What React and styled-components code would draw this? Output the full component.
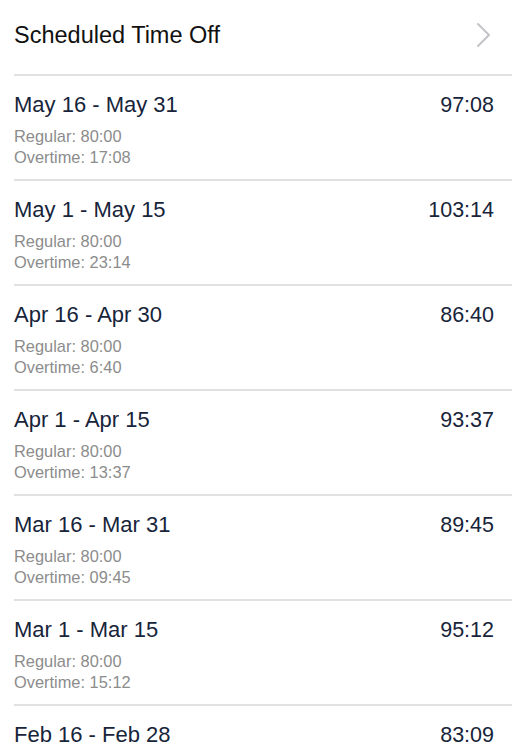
import React from "react";
import styled, { createGlobalStyle } from "styled-components";

const Global = createGlobalStyle`
  html, body { margin: 0; padding: 0; background: #fff; }
  body { font-family: "Liberation Sans", Arial, sans-serif; -webkit-font-smoothing: antialiased; }
`;

const Page = styled.div`
  width: 512px;
  height: 754px;
  overflow: hidden;
  background: #fff;
`;

const Header = styled.div`
  height: 74px;
  display: flex;
  align-items: center;
  justify-content: space-between;
  padding: 0 20px 4px 14px;
  box-sizing: border-box;
`;

const HeaderTitle = styled.div`
  font-size: 23.5px;
  color: #111;
`;

const List = styled.div`
  margin-left: 14px;
`;

const Row = styled.div`
  border-top: 2px solid #e1e1e1;
  padding: 16px 18px 11px 0;
  display: flex;
  justify-content: space-between;
  align-items: flex-start;
`;

const Info = styled.div`
  display: flex;
  flex-direction: column;
`;

const Title = styled.div`
  font-size: 22px;
  line-height: 26px;
  color: #17243a;
  margin-bottom: 8px;
`;

const Sub = styled.div`
  font-size: 16.4px;
  line-height: 21px;
  color: #8c8c8c;
`;

const Total = styled.div`
  font-size: 21.5px;
  line-height: 26px;
  color: #17243a;
`;

const rows = [
  ["May 16 - May 31", "97:08", "80:00", "17:08"],
  ["May 1 - May 15", "103:14", "80:00", "23:14"],
  ["Apr 16 - Apr 30", "86:40", "80:00", "6:40"],
  ["Apr 1 - Apr 15", "93:37", "80:00", "13:37"],
  ["Mar 16 - Mar 31", "89:45", "80:00", "09:45"],
  ["Mar 1 - Mar 15", "95:12", "80:00", "15:12"],
  ["Feb 16 - Feb 28", "83:09", "80:00", "03:09"],
];

export default function App() {
  return (
    <Page>
      <Global />
      <Header>
        <HeaderTitle>Scheduled Time Off</HeaderTitle>
        <svg width="16" height="26" viewBox="0 0 16 26" fill="none">
          <path d="M2 2 L13 13 L2 24" stroke="#c4c4c8" strokeWidth="2" strokeLinecap="round" strokeLinejoin="round" />
        </svg>
      </Header>
      <List>
        {rows.map(([t, total, reg, ot]) => (
          <Row key={t}>
            <Info>
              <Title>{t}</Title>
              <Sub>Regular: {reg}</Sub>
              <Sub>Overtime: {ot}</Sub>
            </Info>
            <Total>{total}</Total>
          </Row>
        ))}
      </List>
    </Page>
  );
}
